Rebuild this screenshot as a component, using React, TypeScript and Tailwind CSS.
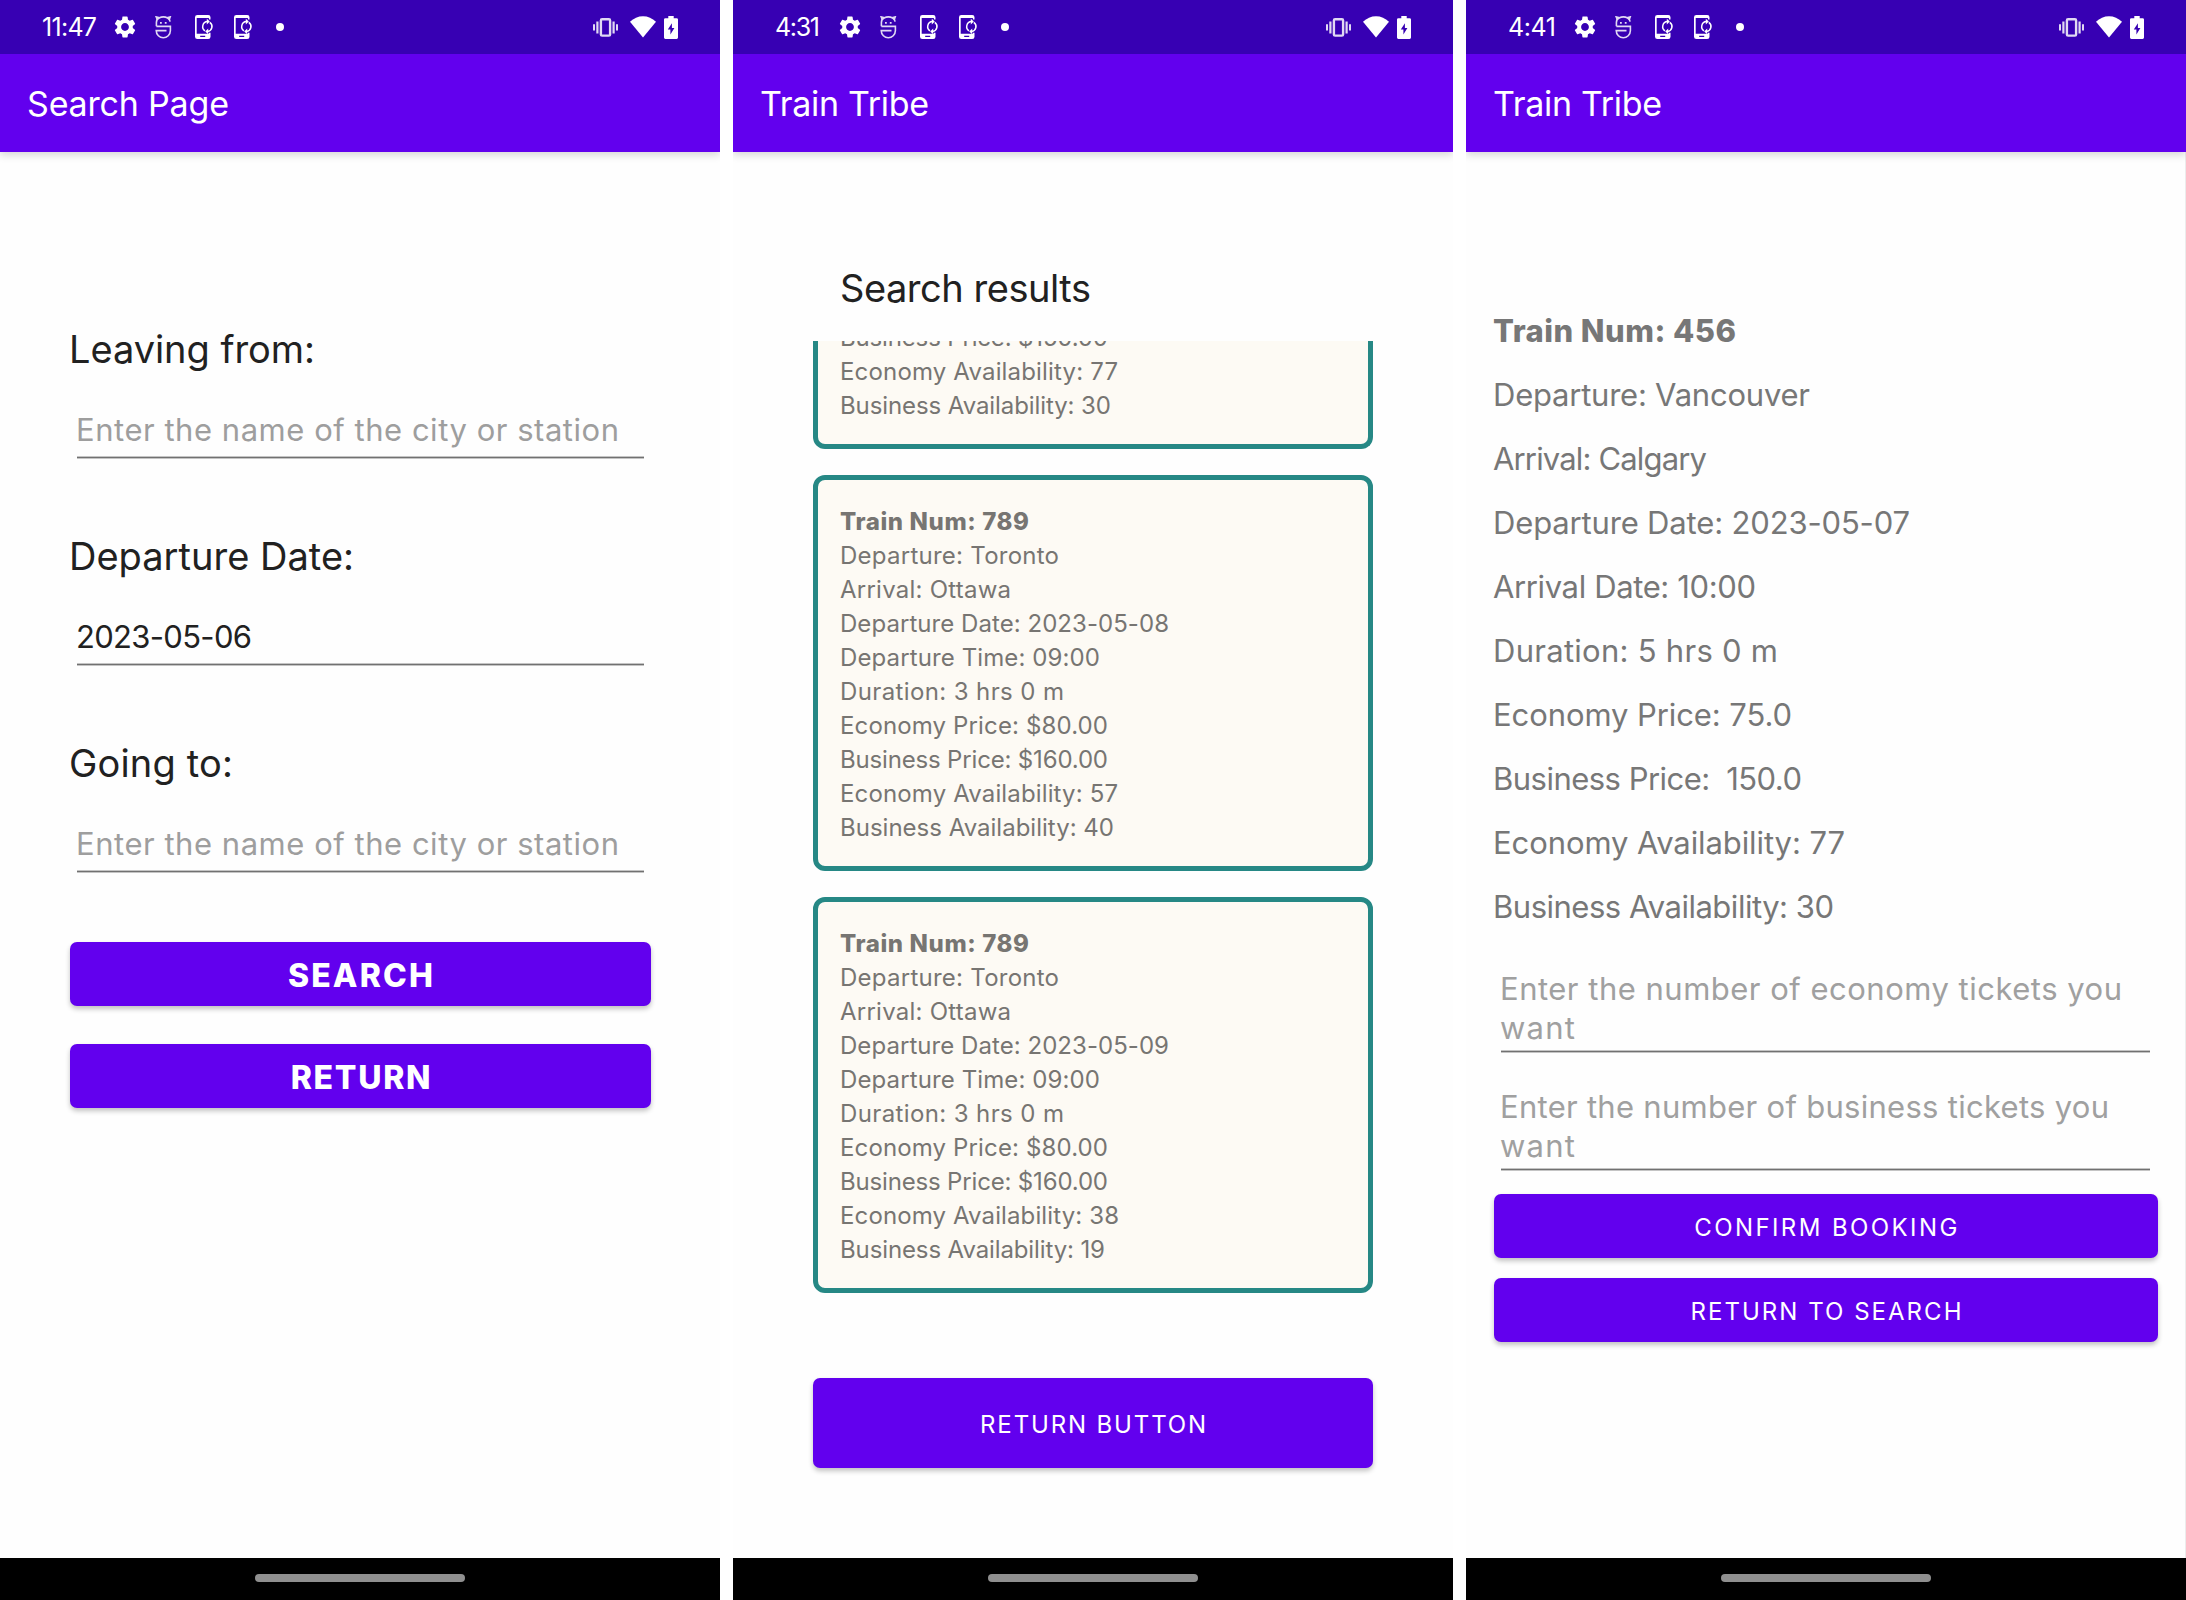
import { useLayoutEffect, useRef, useState, type ReactNode } from "react";
import { MdSettings } from "react-icons/md";

/** One line of text, tracked so that it spans the given width. */
function Fit({ text, width, className = "" }: { text: string; width: number; className?: string }) {
  const ref = useRef<HTMLSpanElement>(null);
  const [tracking, setTracking] = useState(0);
  useLayoutEffect(() => {
    const el = ref.current;
    if (!el) return;
    el.style.letterSpacing = "0px";
    const natural = el.getBoundingClientRect().width;
    const next = (width - natural) / (text.length - 1);
    el.style.letterSpacing = `${next}px`;
    setTracking(next);
  }, [text, width]);
  return (
    <span
      ref={ref}
      className={`inline-block w-max whitespace-pre ${className}`}
      style={{ letterSpacing: tracking }}
    >
      {text}
    </span>
  );
}

function MonsterIcon() {
  return (
    <svg width="17" height="23" viewBox="0 0 17 23" fill="none" stroke="white" strokeWidth="1.6" opacity="0.85">
      <path d="M1.4 10.2V6.4C1.4 4.2 2.4 2.8 4 2C6.6.7 10.2.7 12.6 2C14.2 2.9 14.9 3.9 15.1 5.6" />
      <path d="M2.4 4L1.2.9L4.6 1.8M14.1 4L15.2.9L12 1.8" />
      <path d="M1.4 10.4H15.4V14.6C15.4 18.8 12 21.7 8.3 21.7C4.6 21.7 1.2 18.8 1.2 14.6H11.5" />
      <path d="M5 6.8H6.8M9.8 6.8H11.6" strokeWidth="1.8" />
    </svg>
  );
}

function PhoneSyncIcon() {
  return (
    <svg width="19" height="24" viewBox="0 0 19 24">
      <path
        fill="white"
        fillRule="evenodd"
        d="M2.4 0H13.2Q15.5 0 15.5 2.3V4.6H13.9V3H1.7V18.8H13.9V17.8H15.5V21.7Q15.5 24 13.2 24H2.4Q0 24 0 21.7V2.3Q0 0 2.4 0ZM5.2 20.7V22.1H10.2V20.7Z"
      />
      <g fill="none" stroke="white" strokeWidth="1.5">
        <path d="M10 15.8A5 5 0 0 1 12.4 6.6" />
        <path d="M14.8 7.3A5 5 0 0 1 12.6 16.4" />
      </g>
      <path fill="white" d="M11.8 3.8L14.8 6.6L11.8 9.4ZM13.2 13.6L10.2 16.4L13.2 19.2Z" />
    </svg>
  );
}

function VibrateIcon() {
  return (
    <svg width="25" height="19" viewBox="0 0 25 19" fill="none" stroke="white" opacity="0.85">
      <rect x="7.9" y="1.2" width="9.2" height="16.4" rx="1.2" strokeWidth="2.4" />
      <path d="M4.4 3.5V15.5M20.6 3.5V15.5" strokeWidth="2.2" />
      <path d="M1 6.2V12.6M24 6.2V12.6" strokeWidth="2" />
    </svg>
  );
}

function WifiIcon() {
  return (
    <svg width="26" height="22" viewBox="0 0 26 22">
      <path fill="white" d="M0 5.8Q5.6.2 13 .2T26 5.8L13 21.5Z" />
    </svg>
  );
}

function BatteryIcon() {
  return (
    <svg width="14" height="23" viewBox="0 0 14 23">
      <path
        fill="white"
        fillRule="evenodd"
        d="M4.3 0H9.7V2.2H12.6Q14 2.2 14 3.6V21.6Q14 23 12.6 23H1.4Q0 23 0 21.6V3.6Q0 2.2 1.4 2.2H4.3ZM7.9 7.2L3.8 13.6H6.4V18.6L10.4 12H7.9Z"
      />
    </svg>
  );
}

type ScreenProps = {
  time: string;
  timeWidth: number;
  slot: string;
  title: string;
  titleWidth: number;
  className: string;
  children: ReactNode;
};

function Screen({ time, timeWidth, slot, title, titleWidth, className, children }: ScreenProps) {
  return (
    <section className="flex h-[1600px] w-[720px] shrink-0 flex-col bg-[#fefefe]">
      <header className="relative z-10 shadow-[0_3px_8px_rgba(0,0,0,0.16)] [clip-path:inset(0_0_-12px_0)]">
        <div className="flex h-[54px] items-center bg-[#3700b3] pr-[42px] pl-[42px] text-white">
          <div className={`flex ${slot}`}>
            <Fit text={time} width={timeWidth} className="text-[25px] leading-[56px]" />
          </div>
          <MdSettings className="size-[26px]" />
          <div className="ml-[17px] flex">
            <MonsterIcon />
          </div>
          <div className="ml-[23px] flex gap-5">
            <PhoneSyncIcon />
            <PhoneSyncIcon />
          </div>
          <div className="ml-[23px] size-2 rounded-full bg-white" />
          <div className="ml-auto flex items-center">
            <VibrateIcon />
            <div className="mr-2 ml-3 flex">
              <WifiIcon />
            </div>
            <BatteryIcon />
          </div>
        </div>
        <div className="flex h-[98px] bg-[#6200ee] pl-[27px] text-white">
          <Fit text={title} width={titleWidth} className="text-[34px] leading-[100px]" />
        </div>
      </header>
      <main className={`flex flex-1 flex-col ${className}`}>{children}</main>
      <footer className="flex h-[42px] items-center justify-center bg-black pb-[2px]">
        <div className="h-2 w-[210px] rounded-full bg-[#8f8f8f]" />
      </footer>
    </section>
  );
}

function Underline() {
  return <div className="h-[3px] border-y border-[#c4c4c4] bg-[#717171]" />;
}

function Button({ label, width, className }: { label: string; width: number; className: string }) {
  return (
    <button
      type="button"
      className={`flex items-center justify-center rounded-[7px] bg-[#6200ee] pl-0.5 text-white shadow-[0_3px_5px_rgba(0,0,0,0.24)] ${className}`}
    >
      <Fit text={label} width={width} />
    </button>
  );
}

type FormField = { label: string; labelWidth: number; value: string; valueWidth: number; tone: string };

const formFields: FormField[] = [
  { label: "Leaving from:", labelWidth: 246, value: "Enter the name of the city or station", valueWidth: 543, tone: "text-[#9e9e9e]" },
  { label: "Departure Date:", labelWidth: 285, value: "2023-05-06", valueWidth: 176, tone: "text-[#212121]" },
  { label: "Going to:", labelWidth: 164, value: "Enter the name of the city or station", valueWidth: 543, tone: "text-[#9e9e9e]" },
];

type Row = [text: string, width: number];

const cards: Row[][] = [
  [
    ["Train Num: 789", 189],
    ["Departure: Toronto", 219],
    ["Arrival: Ottawa", 171],
    ["Departure Date: 2023-05-08", 329],
    ["Departure Time: 09:00", 260],
    ["Duration: 3 hrs 0 m", 224],
    ["Economy Price: $80.00", 268],
    ["Business Price: $160.00", 268],
    ["Economy Availability: 57", 278],
    ["Business Availability: 40", 274],
  ],
  [
    ["Train Num: 789", 189],
    ["Departure: Toronto", 219],
    ["Arrival: Ottawa", 171],
    ["Departure Date: 2023-05-09", 329],
    ["Departure Time: 09:00", 260],
    ["Duration: 3 hrs 0 m", 224],
    ["Economy Price: $80.00", 268],
    ["Business Price: $160.00", 268],
    ["Economy Availability: 38", 279],
    ["Business Availability: 19", 265],
  ],
];

const scrolledCard: Row[] = [
  ["Business Price: $150.00", 268],
  ["Economy Availability: 77", 278],
  ["Business Availability: 30", 271],
];

const details: Row[] = [
  ["Train Num: 456", 243],
  ["Departure: Vancouver", 317],
  ["Arrival: Calgary", 214],
  ["Departure Date: 2023-05-07", 417],
  ["Arrival Date: 10:00", 263],
  ["Duration: 5 hrs 0 m", 285],
  ["Economy Price: 75.0", 299],
  ["Business Price:  150.0", 309],
  ["Economy Availability: 77", 352],
  ["Business Availability: 30", 341],
];

export default function App() {
  return (
    <div className="flex h-[1600px] w-[2186px] gap-[13px] overflow-hidden bg-white font-['Inter',sans-serif]">
      <Screen time="11:47" timeWidth={55} slot="w-[70px]" title="Search Page" titleWidth={202} className="px-[70px] pt-[175px]">
        <div className="flex flex-col gap-[75px]">
          {formFields.map((f) => (
            <div key={f.label} className="flex flex-col">
              <Fit text={f.label} width={f.labelWidth} className="-ml-px text-[38px] leading-[44px] text-[#212121]" />
              <div className="mt-[41px] ml-[7px] w-[567px]">
                <div className="mb-2 -ml-px flex h-9">
                  <Fit text={f.value} width={f.valueWidth} className={`text-[31px] leading-9 ${f.tone}`} />
                </div>
                <Underline />
              </div>
            </div>
          ))}
        </div>
        <div className="mt-[69px] flex w-[581px] flex-col gap-[38px]">
          <Button label="SEARCH" width={145} className="h-16 pt-1 text-[32px] font-extrabold" />
          <Button label="RETURN" width={140} className="h-16 pt-1 text-[32px] font-extrabold" />
        </div>
      </Screen>

      <Screen time="4:31" timeWidth={45} slot="w-[62px]" title="Train Tribe" titleWidth={169} className="px-20 pt-[114px]">
        <Fit text="Search results" width={251} className="ml-[27px] text-[38px] leading-[44px] text-[#212121]" />
        <div className="mt-[31px] flex flex-col gap-[26px]">
          <div className="flex h-[108px] flex-col justify-end overflow-hidden rounded-b-xl border-[5px] border-t-0 border-[#268885] bg-[#fdfaf4] pb-[21px] pl-[22px] text-[24px] leading-[34px] text-[#777572]">
            {scrolledCard.map(([text, width]) => (
              <Fit key={text} text={text} width={width} className="shrink-0" />
            ))}
          </div>
          {cards.map((rows) => (
            <div
              key={rows[3][0]}
              className="flex h-[396px] flex-col rounded-xl border-[5px] border-[#268885] bg-[#fdfaf4] pt-[25px] pl-[22px] text-[24px] leading-[34px] text-[#777572]"
            >
              {rows.map(([text, width], i) => (
                <Fit key={text} text={text} width={width} className={i === 0 ? "font-extrabold" : ""} />
              ))}
            </div>
          ))}
        </div>
        <Button label="RETURN BUTTON" width={226} className="mt-[85px] h-[90px] pt-1 text-[24px]" />
      </Screen>

      <Screen
        time="4:41"
        timeWidth={48}
        slot="w-[64px]"
        title="Train Tribe"
        titleWidth={169}
        className="border-r border-[#ececec] pt-[147px] pr-[27px] pl-7"
      >
        <div className="-ml-px flex flex-col text-[31px] leading-[64px] text-[#777777]">
          {details.map(([text, width], i) => (
            <Fit key={text} text={text} width={width} className={i === 0 ? "font-extrabold" : ""} />
          ))}
        </div>
        <div className="mt-[30px] flex flex-col gap-[34px] pr-2 pl-[7px] text-[31px] leading-[39px] text-[#a0a0a0]">
          {[
            ["economy", 622] as const,
            ["business", 609] as const,
          ].map(([kind, width]) => (
            <div key={kind}>
              <div className="mb-[3px] -ml-px flex h-[78px] flex-col">
                <Fit text={`Enter the number of ${kind} tickets you`} width={width} />
                <Fit text="want" width={75} />
              </div>
              <Underline />
            </div>
          ))}
        </div>
        <div className="mt-[23px] flex flex-col gap-5">
          <Button label="CONFIRM BOOKING" width={263} className="h-16 pt-1 text-[24px]" />
          <Button label="RETURN TO SEARCH" width={271} className="h-16 pt-1 text-[24px]" />
        </div>
      </Screen>
    </div>
  );
}
